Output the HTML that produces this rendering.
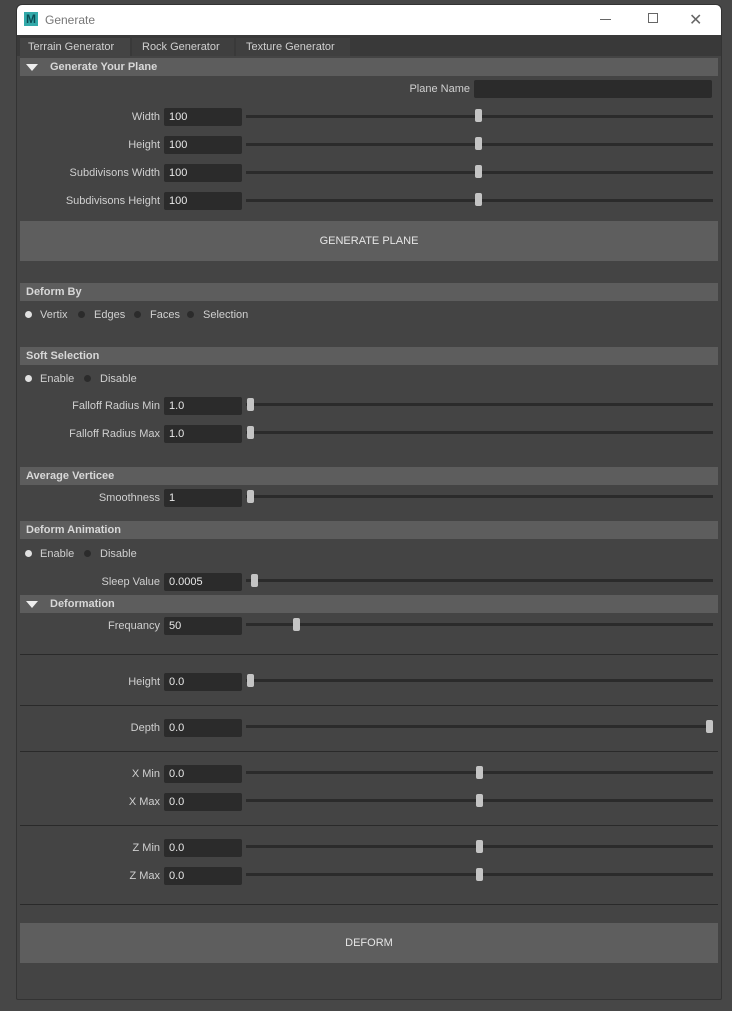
<!DOCTYPE html>
<html><head><meta charset="utf-8"><style>
*{margin:0;padding:0;box-sizing:border-box}
body{width:732px;height:1011px;background:#474747;position:relative;overflow:hidden;font-family:"Liberation Sans",sans-serif;font-size:11px;color:#d0d0d0}
div{position:absolute}
.win{left:16px;top:4px;width:706px;height:996px;background:#444;border:1px solid #333;border-radius:6px 6px 2px 2px;overflow:hidden}
.title{left:0;top:0;width:706px;height:30px;background:#fff;color:#777;font-size:12px}
.hdr{left:3px;width:698px;height:18px;background:#5d5d5d;color:#d8d8d8;font-weight:bold;font-size:11px;line-height:18px;padding-left:6px}
.lbl{width:143px;left:0;text-align:right;height:18px;line-height:18px}
.fld{left:147px;width:78px;height:18px;background:#2b2b2b;border-radius:2px;color:#e8e8e8;line-height:18px;padding-left:5px}
.trk{left:229px;width:467px;height:3px;background:#2b2b2b}
.hdl{width:7px;height:13px;background:#c4c4c4;border-radius:2px}
.btn{left:3px;width:698px;height:40px;background:#5e5e5e;text-align:center;line-height:40px;color:#e6e6e6}
.sep{left:3px;width:698px;height:1px;background:#2a2a2a}
.rad{width:7px;height:7px;border-radius:50%;background:#2b2b2b}
.rad.on{background:#e0e0e0}
.rt{height:14px;line-height:14px}
.tri{width:0;height:0;border-left:6px solid transparent;border-right:6px solid transparent;border-top:7px solid #eee}
</style></head><body>
<div class="win">
 <div class="title">
  <div style="left:7px;top:7px;width:14px;height:14px;background:#3aa;color:#0a4d55;font-weight:bold;font-size:12px;line-height:14px;text-align:center">M</div>
  <div style="left:28px;top:8px">Generate</div>
  <div style="left:583px;top:14px;width:11px;height:1px;background:#666"></div>
  <div style="left:631px;top:8px;width:10px;height:10px;border:1px solid #666"></div>
  <div style="left:672px;top:5px;font-size:16px;color:#666">✕</div>
 </div>
 <div style="left:0;top:30px;width:706px;height:21px;background:#393939"></div>
 <div style="left:3px;top:33px;width:110px;height:18px;background:#444;line-height:18px;padding-left:8px">Terrain Generator</div>
 <div style="left:115px;top:33px;width:102px;height:18px;background:#3f3f3f;line-height:18px;padding-left:10px">Rock Generator</div>
 <div style="left:219px;top:33px;width:114px;height:18px;background:#3f3f3f;line-height:18px;padding-left:10px">Texture Generator</div>

 <div class="hdr" style="top:53px;padding-left:30px">Generate Your Plane</div>
 <div class="tri" style="left:9px;top:59px"></div>
 <div style="left:300px;top:75px;width:153px;text-align:right;line-height:18px">Plane Name</div>
 <div class="fld" style="left:457px;top:75px;width:238px"></div>

 <div class="lbl" style="top:103px">Width</div><div class="fld" style="top:103px">100</div><div class="trk" style="top:110px"></div><div class="hdl" style="left:458px;top:104px"></div>
 <div class="lbl" style="top:131px">Height</div><div class="fld" style="top:131px">100</div><div class="trk" style="top:138px"></div><div class="hdl" style="left:458px;top:132px"></div>
 <div class="lbl" style="top:159px">Subdivisons Width</div><div class="fld" style="top:159px">100</div><div class="trk" style="top:166px"></div><div class="hdl" style="left:458px;top:160px"></div>
 <div class="lbl" style="top:187px">Subdivisons Height</div><div class="fld" style="top:187px">100</div><div class="trk" style="top:194px"></div><div class="hdl" style="left:458px;top:188px"></div>
 <div class="btn" style="top:216px">GENERATE PLANE</div>

 <div class="hdr" style="top:278px">Deform By</div>
 <div class="rad on" style="left:8px;top:306px"></div><div class="rt" style="left:23px;top:303px">Vertix</div>
 <div class="rad" style="left:61px;top:306px"></div><div class="rt" style="left:77px;top:303px">Edges</div>
 <div class="rad" style="left:117px;top:306px"></div><div class="rt" style="left:133px;top:303px">Faces</div>
 <div class="rad" style="left:170px;top:306px"></div><div class="rt" style="left:186px;top:303px">Selection</div>

 <div class="hdr" style="top:342px">Soft Selection</div>
 <div class="rad on" style="left:8px;top:370px"></div><div class="rt" style="left:23px;top:367px">Enable</div>
 <div class="rad" style="left:67px;top:370px"></div><div class="rt" style="left:83px;top:367px">Disable</div>
 <div class="lbl" style="top:392px">Falloff Radius Min</div><div class="fld" style="top:392px">1.0</div><div class="trk" style="top:398px"></div><div class="hdl" style="left:230px;top:393px"></div>
 <div class="lbl" style="top:420px">Falloff Radius Max</div><div class="fld" style="top:420px">1.0</div><div class="trk" style="top:426px"></div><div class="hdl" style="left:230px;top:421px"></div>

 <div class="hdr" style="top:462px">Average Verticee</div>
 <div class="lbl" style="top:484px">Smoothness</div><div class="fld" style="top:484px">1</div><div class="trk" style="top:490px"></div><div class="hdl" style="left:230px;top:485px"></div>

 <div class="hdr" style="top:516px">Deform Animation</div>
 <div class="rad on" style="left:8px;top:545px"></div><div class="rt" style="left:23px;top:542px">Enable</div>
 <div class="rad" style="left:67px;top:545px"></div><div class="rt" style="left:83px;top:542px">Disable</div>
 <div class="lbl" style="top:568px">Sleep Value</div><div class="fld" style="top:568px">0.0005</div><div class="trk" style="top:574px"></div><div class="hdl" style="left:234px;top:569px"></div>

 <div class="hdr" style="top:590px;padding-left:30px">Deformation</div>
 <div class="tri" style="left:9px;top:596px"></div>
 <div class="lbl" style="top:612px">Frequancy</div><div class="fld" style="top:612px">50</div><div class="trk" style="top:618px"></div><div class="hdl" style="left:276px;top:613px"></div>
 <div class="sep" style="top:649px"></div>
 <div class="lbl" style="top:668px">Height</div><div class="fld" style="top:668px">0.0</div><div class="trk" style="top:674px"></div><div class="hdl" style="left:230px;top:669px"></div>
 <div class="sep" style="top:700px"></div>
 <div class="lbl" style="top:714px">Depth</div><div class="fld" style="top:714px">0.0</div><div class="trk" style="top:720px"></div><div class="hdl" style="left:689px;top:715px"></div>
 <div class="sep" style="top:746px"></div>
 <div class="lbl" style="top:760px">X Min</div><div class="fld" style="top:760px">0.0</div><div class="trk" style="top:766px"></div><div class="hdl" style="left:459px;top:761px"></div>
 <div class="lbl" style="top:788px">X Max</div><div class="fld" style="top:788px">0.0</div><div class="trk" style="top:794px"></div><div class="hdl" style="left:459px;top:789px"></div>
 <div class="sep" style="top:820px"></div>
 <div class="lbl" style="top:834px">Z Min</div><div class="fld" style="top:834px">0.0</div><div class="trk" style="top:840px"></div><div class="hdl" style="left:459px;top:835px"></div>
 <div class="lbl" style="top:862px">Z Max</div><div class="fld" style="top:862px">0.0</div><div class="trk" style="top:868px"></div><div class="hdl" style="left:459px;top:863px"></div>
 <div class="sep" style="top:899px"></div>
 <div class="btn" style="top:918px">DEFORM</div>
</div>
</body></html>
